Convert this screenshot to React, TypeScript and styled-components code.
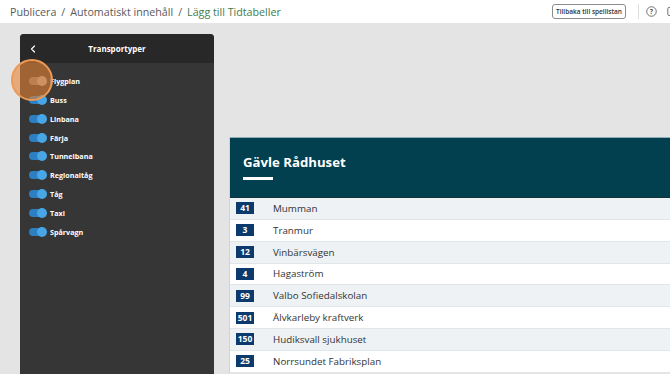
import React from "react";
import styled, { createGlobalStyle } from "styled-components";

const Global = createGlobalStyle`
  html, body { margin: 0; padding: 0; }
  body { width: 670px; height: 374px; overflow: hidden; font-family: "Open Sans", "Noto Sans", sans-serif; }
  * { box-sizing: border-box; }
`;

const Page = styled.div`
  width: 670px;
  height: 374px;
  display: flex;
  flex-direction: column;
  overflow: hidden;
`;

const TopBar = styled.header`
  height: 23px;
  flex: none;
  background: #ffffff;
  display: flex;
  align-items: center;
  justify-content: space-between;
  padding: 0 0 0 10px;
`;

const Crumbs = styled.nav`
  font-size: 10.7px;
  color: #5a5a5a;
  display: flex;
  gap: 5px;
  white-space: nowrap;
`;

const Crumb = styled.span<{ $current?: boolean }>`
  color: ${(p) => (p.$current ? "#3f7d4e" : "#5a5a5a")};
`;

const Actions = styled.div`
  display: flex;
  align-items: center;
  height: 100%;
`;

const BackButton = styled.button`
  height: 15px;
  width: 74px;
  padding: 0;
  border: 1px solid #8c8c8c;
  border-radius: 3px;
  background: #fff;
  font-family: "Open Sans", sans-serif;
  font-size: 6.5px;
  font-weight: 600;
  color: #333;
  white-space: nowrap;
`;

const Divider = styled.div`
  width: 1px;
  height: 15px;
  background: #dddddd;
  margin: 0 7px 0 12px;
`;

const IconSlot = styled.div<{ $w: number; $end?: boolean }>`
  width: ${(p) => p.$w}px;
  display: flex;
  align-items: center;
  justify-content: ${(p) => (p.$end ? "flex-end" : "flex-start")};
  flex: none;
`;

const Main = styled.main`
  flex: 1;
  background: #e4e4e4;
  display: flex;
  padding: 11px 0 0 20px;
  min-height: 0;
`;

const Panel = styled.aside`
  width: 194px;
  flex: none;
  background: #363636;
  border-radius: 4px 4px 0 0;
  display: flex;
  flex-direction: column;
  position: relative;
`;

const PanelHeader = styled.div`
  height: 29px;
  background: #282828;
  border-radius: 4px 4px 0 0;
  display: flex;
  align-items: center;
  justify-content: center;
  position: relative;
  color: #fff;
  font-size: 8px;
  font-weight: 700;
`;

const BackChevron = styled.span`
  position: absolute;
  left: 10px;
  top: 50%;
  transform: translateY(-50%);
  display: flex;
`;

const ToggleList = styled.ul`
  list-style: none;
  margin: 0;
  padding: 8.6px 0 0 9px;
`;

const ToggleRow = styled.li`
  height: 18.85px;
  display: flex;
  align-items: center;
  gap: 4px;
  color: #fff;
  font-size: 7.2px;
  font-weight: 700;
`;

const Track = styled.span<{ $off?: boolean }>`
  width: 17px;
  height: 8px;
  border-radius: 4px;
  background: ${(p) => (p.$off ? "#7a7a7a" : "#2b7fc2")};
  position: relative;
  flex: none;
`;

const Knob = styled.span<{ $off?: boolean }>`
  position: absolute;
  right: -1px;
  top: -1px;
  width: 10px;
  height: 10px;
  border-radius: 50%;
  background: ${(p) => (p.$off ? "#a8a8a8" : "#48a5e6")};
`;

const Highlight = styled.span`
  position: absolute;
  left: -9px;
  top: 25px;
  width: 42px;
  height: 42px;
  border-radius: 50%;
  background: rgba(232, 132, 52, 0.6);
  border: 2px solid #ec9a55;
  pointer-events: none;
`;

const Preview = styled.section`
  flex: 1;
  padding: 103px 0 0 15px;
  min-width: 0;
`;

const Card = styled.div`
  width: 460px;
  background: #fff;
  border-left: 1px solid #cfd4d6;
`;

const CardHeader = styled.div`
  height: 61px;
  background: #02404f;
  border-top: 1px solid #8fb0ba;
  border-bottom: 1px solid #0f3340;
  padding: 14px 0 0 13px;
`;

const StopTitle = styled.h1`
  margin: 0;
  font-size: 13.2px;
  line-height: 20px;
  font-weight: 700;
  color: #fff;
`;

const TitleBar = styled.div`
  width: 30px;
  height: 3.5px;
  background: #fff;
  margin-top: 4.5px;
`;

const Row = styled.div<{ $alt: boolean }>`
  height: 21.85px;
  display: flex;
  align-items: center;
  background: ${(p) => (p.$alt ? "#eef2f4" : "#ffffff")};
  border-bottom: 1px solid #e1e6e8;
`;

const BadgeCell = styled.div`
  width: 30px;
  flex: none;
  display: flex;
  justify-content: center;
`;

const Badge = styled.span`
  min-width: 18px;
  height: 12px;
  padding: 0 2px;
  background: #0c3a6c;
  color: #fff;
  font-size: 8.5px;
  font-weight: 700;
  line-height: 12px;
  text-align: center;
`;

const Dest = styled.span`
  margin-left: 13px;
  font-size: 9.8px;
  color: #333;
`;

const types = ["Flygplan", "Buss", "Linbana", "Färja", "Tunnelbana", "Regionaltåg", "Tåg", "Taxi", "Spårvagn"];

const departures: [string, string][] = [
  ["41", "Mumman"],
  ["3", "Tranmur"],
  ["12", "Vinbärsvägen"],
  ["4", "Hagaström"],
  ["99", "Valbo Sofiedalskolan"],
  ["501", "Älvkarleby kraftverk"],
  ["150", "Hudiksvall sjukhuset"],
  ["25", "Norrsundet Fabriksplan"],
];

export default function App() {
  return (
    <Page>
      <Global />
      <TopBar>
        <Crumbs>
          <Crumb>Publicera</Crumb>
          <Crumb>/</Crumb>
          <Crumb>Automatiskt innehåll</Crumb>
          <Crumb>/</Crumb>
          <Crumb $current>Lägg till Tidtabeller</Crumb>
        </Crumbs>
        <Actions>
          <BackButton>Tillbaka till spellistan</BackButton>
          <Divider />
          <IconSlot $w={13}>
            <svg width="11" height="11" viewBox="0 0 12 12">
              <circle cx="6" cy="6" r="5.2" fill="none" stroke="#555" strokeWidth="0.9" />
              <text x="6" y="8.6" textAnchor="middle" fontSize="7.5" fontWeight="700" fill="#555" fontFamily="Open Sans, sans-serif">?</text>
            </svg>
          </IconSlot>
          <IconSlot $w={11} $end>
            <svg width="3" height="11" viewBox="0 0 3 11">
              <path d="M3 1.5 H2 a1.2 1.2 0 0 0 -1.2 1.2 V8.3 a1.2 1.2 0 0 0 1.2 1.2 H3" fill="none" stroke="#666" strokeWidth="0.9" />
            </svg>
          </IconSlot>
        </Actions>
      </TopBar>
      <Main>
        <Panel>
          <PanelHeader>
            <BackChevron>
              <svg width="6" height="8" viewBox="0 0 6 8">
                <path d="M4.5 1 L1.5 4 L4.5 7" fill="none" stroke="#fff" strokeWidth="1.2" strokeLinecap="round" strokeLinejoin="round" />
              </svg>
            </BackChevron>
            Transportyper
          </PanelHeader>
          <ToggleList>
            {types.map((t, i) => (
              <ToggleRow key={t}>
                <Track $off={i === 0}>
                  <Knob $off={i === 0} />
                </Track>
                {t}
              </ToggleRow>
            ))}
          </ToggleList>
          <Highlight />
        </Panel>
        <Preview>
          <Card>
            <CardHeader>
              <StopTitle>Gävle Rådhuset</StopTitle>
              <TitleBar />
            </CardHeader>
            {departures.map(([n, d], i) => (
              <Row key={n} $alt={i % 2 === 0}>
                <BadgeCell>
                  <Badge>{n}</Badge>
                </BadgeCell>
                <Dest>{d}</Dest>
              </Row>
            ))}
          </Card>
        </Preview>
      </Main>
    </Page>
  );
}
